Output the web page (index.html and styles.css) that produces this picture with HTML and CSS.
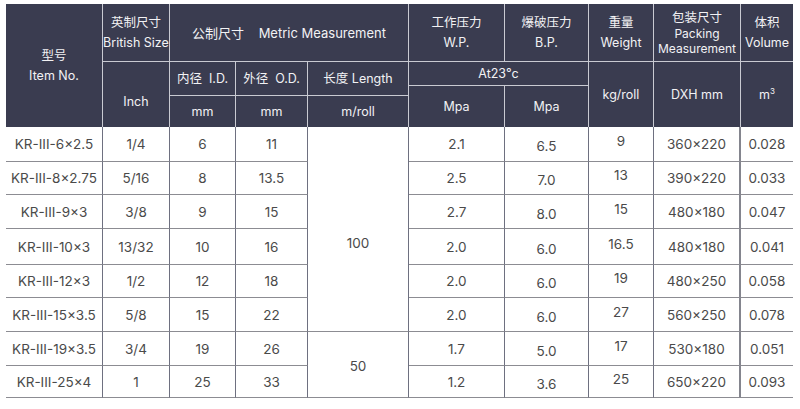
FILE: index.html
```html
<!DOCTYPE html>
<html lang="zh">
<head>
<meta charset="utf-8">
<title>KR-III Specification</title>
<link rel="stylesheet" href="styles.css">
</head>
<body>
<div class="spec">
  <div class="h r4 c-first"><span>型号</span><span>Item No.</span></div>
  <div class="h hb"><span>英制尺寸</span><span>British Size</span></div>
  <div class="h hb s3 metric"><span>公制尺寸&nbsp;&nbsp;&nbsp;&nbsp;Metric Measurement</span></div>
  <div class="h hb"><span>工作压力</span><span>W.P.</span></div>
  <div class="h hb"><span>爆破压力</span><span>B.P.</span></div>
  <div class="h hb"><span>重量</span><span>Weight</span></div>
  <div class="h hb pack"><span>包装尺寸</span><span>Packing</span><span>Measurement</span></div>
  <div class="h hb last"><span>体积</span><span>Volume</span></div>

  <div class="h r3 low">Inch</div>
  <div class="h r2 hb">内径&nbsp;&nbsp;I.D.</div>
  <div class="h r2 hb">外径&nbsp;&nbsp;O.D.</div>
  <div class="h r2 hb">长度 Length</div>
  <div class="h s2 hb">At23°c</div>
  <div class="h r3">kg/roll</div>
  <div class="h r3">DXH mm</div>
  <div class="h r3 last"><span>m<sup>3</sup></span></div>

  <div class="h r2">Mpa</div>
  <div class="h r2">Mpa</div>

  <div class="h">mm</div>
  <div class="h">mm</div>
  <div class="h">m/roll</div>

  <div class="d">KR-III-6×2.5</div><div class="d">1/4</div><div class="d">6</div><div class="d">11</div>
  <div class="d r6 hundred">100</div>
  <div class="d">2.1</div><div class="d lo">6.5</div><div class="d hi">9</div><div class="d vol">360×220</div><div class="d last">0.028</div>

  <div class="d">KR-III-8×2.75</div><div class="d">5/16</div><div class="d">8</div><div class="d">13.5</div>
  <div class="d">2.5</div><div class="d lo">7.0</div><div class="d hi">13</div><div class="d vol">390×220</div><div class="d last">0.033</div>

  <div class="d">KR-III-9×3</div><div class="d">3/8</div><div class="d">9</div><div class="d">15</div>
  <div class="d">2.7</div><div class="d lo">8.0</div><div class="d hi">15</div><div class="d vol">480×180</div><div class="d last">0.047</div>

  <div class="d">KR-III-10×3</div><div class="d">13/32</div><div class="d">10</div><div class="d">16</div>
  <div class="d">2.0</div><div class="d lo">6.0</div><div class="d hi">16.5</div><div class="d vol">480×180</div><div class="d last">0.041</div>

  <div class="d">KR-III-12×3</div><div class="d">1/2</div><div class="d">12</div><div class="d">18</div>
  <div class="d">2.0</div><div class="d lo">6.0</div><div class="d hi">19</div><div class="d vol">480×250</div><div class="d last">0.058</div>

  <div class="d">KR-III-15×3.5</div><div class="d">5/8</div><div class="d">15</div><div class="d">22</div>
  <div class="d">2.0</div><div class="d lo">6.0</div><div class="d hi">27</div><div class="d vol">560×250</div><div class="d last">0.078</div>

  <div class="d">KR-III-19×3.5</div><div class="d">3/4</div><div class="d">19</div><div class="d">26</div>
  <div class="d r2 fifty">50</div>
  <div class="d">1.7</div><div class="d lo">5.0</div><div class="d hi">17</div><div class="d vol">530×180</div><div class="d last">0.051</div>

  <div class="d">KR-III-25×4</div><div class="d">1</div><div class="d">25</div><div class="d">33</div>
  <div class="d">1.2</div><div class="d lo">3.6</div><div class="d hi">25</div><div class="d vol">650×220</div><div class="d last">0.093</div>
</div>
</body>
</html>
```

FILE: styles.css
```css
html, body {
  margin: 0;
  padding: 0;
  background: #ffffff;
}

.spec {
  margin: 4px 0 0 6px;
  display: grid;
  grid-template-columns: 97px 67px 66px 72px 101px 96px 84px 65px 87px 52px;
  grid-template-rows: 58px 24px 10px 31px 35px 33px 34px 36px 33px 34px 34px 32px;
  font-family: "Inter", "Noto Sans CJK SC", sans-serif;
}

.spec > div {
  box-sizing: border-box;
  display: flex;
  flex-direction: column;
  align-items: center;
  justify-content: center;
  text-align: center;
  white-space: nowrap;
}

.h {
  background: #3a3c50;
  color: #f2f2f4;
  font-size: 12.5px;
  line-height: 20px;
  border-right: 1px solid #c9cad2;
}

.h.hb {
  border-bottom: 1px solid #c9cad2;
}

.h.last,
.d.last {
  border-right: none;
}

.h.pack {
  line-height: 15px;
  font-size: 12px;
}

.h.pack span:first-child {
  font-size: 12.5px;
  line-height: 17px;
}

.h.metric {
  font-size: 13px;
}

.h.low {
  padding-top: 15px;
}

.h sup {
  font-size: 8px;
  line-height: 0;
  vertical-align: 5px;
}

.s2 { grid-column: span 2; }
.s3 { grid-column: span 3; }
.r2 { grid-row: span 2; }
.r3 { grid-row: span 3; }
.r4 { grid-row: span 4; }
.r6 { grid-row: span 6; }

.d {
  color: #4a4a4a;
  font-size: 13.5px;
  border-right: 1px solid #6e7080;
  border-bottom: 1px solid #8c8c92;
}

.d.lo {
  padding-top: 4px;
}

.d.hi {
  padding-bottom: 6px;
}

.d.vol {
  border-right: 2px solid #84858e;
}

.d.hundred {
  padding-top: 28px;
}

.d.fifty {
  padding-top: 2px;
}
```
